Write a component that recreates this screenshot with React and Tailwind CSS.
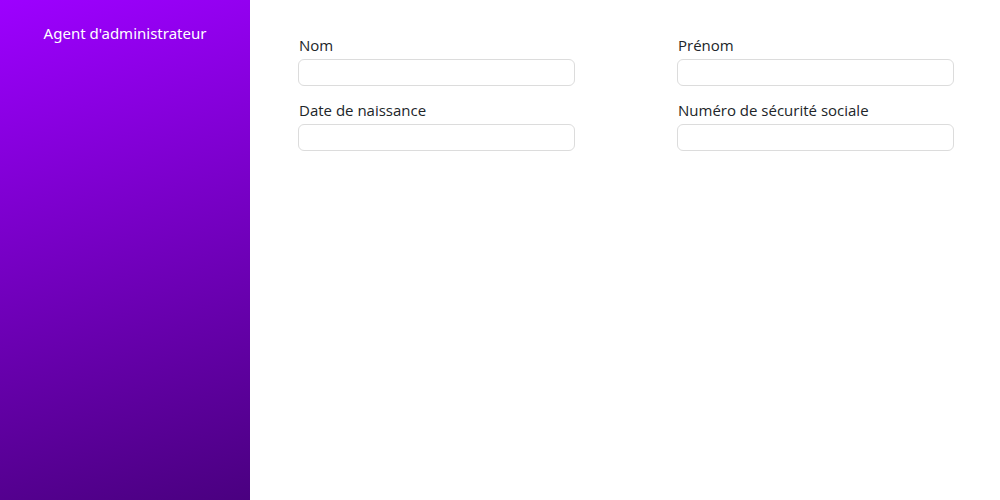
const fields = [
  { id: 'nom', label: 'Nom' },
  { id: 'prenom', label: 'Prénom' },
  { id: 'naissance', label: 'Date de naissance' },
  { id: 'secu', label: 'Numéro de sécurité sociale' },
];

const App = () => {
  return (
    <div className="flex w-full h-[500px] bg-white">
      {/* Sidebar */}
      <aside className="w-[250px] shrink-0 bg-[linear-gradient(165deg,#9d00ff,#4a0080)] pt-[22px]">
        <p className="text-center text-white text-[15px] font-['Noto_Sans',sans-serif]">
          Agent d'administrateur
        </p>
      </aside>

      {/* Form */}
      <main className="flex-1 pl-[48px] pr-[46px] pt-[35px]">
        <div className="grid grid-cols-2 gap-x-[102px] gap-y-[14px]">
          {fields.map(f => (
            <div key={f.id} className="flex flex-col">
              <label
                htmlFor={f.id}
                className="pl-[1px] mb-[4px] text-[15px] leading-[20px] text-[#212529] font-['Open_Sans',sans-serif]"
              >
                {f.label}
              </label>
              <input
                id={f.id}
                type="text"
                className="h-[27px] w-full rounded-[6px] border border-[#dcdcdc] bg-white outline-none"
              />
            </div>
          ))}
        </div>
      </main>
    </div>
  );
};

export default App;
